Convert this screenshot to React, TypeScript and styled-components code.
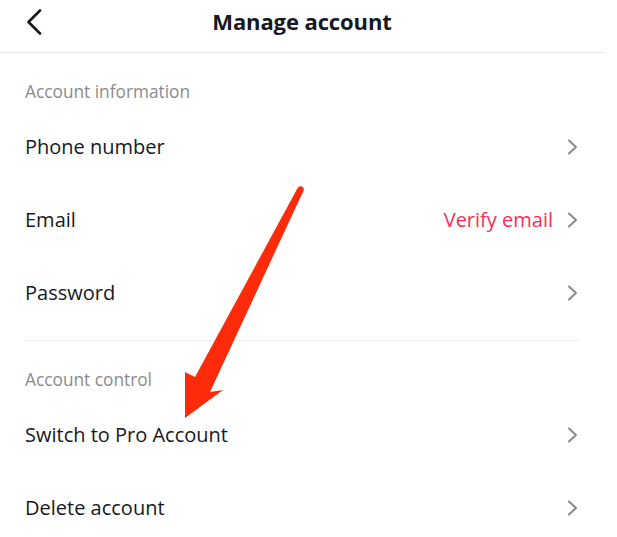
import React from 'react'
import styled, { createGlobalStyle } from 'styled-components'

const GlobalStyle = createGlobalStyle`
  html, body {
    margin: 0;
    padding: 0;
    background: #fff;
  }
  body {
    font-family: 'Open Sans', 'Liberation Sans', sans-serif;
    color: #161823;
  }
`

const Page = styled.div`
  position: relative;
  width: 617px;
  height: 537px;
  overflow: hidden;
  background: #fff;
`

const Screen = styled.div`
  width: 604px;
`

const Header = styled.header`
  display: grid;
  grid-template-columns: 80px 1fr 80px;
  align-items: center;
  height: 52px;
  border-bottom: 1px solid #e4e4e4;
`

const BackButton = styled.button`
  display: flex;
  align-items: center;
  justify-content: flex-start;
  height: 52px;
  padding: 0 0 8px 26px;
  margin: 0;
  border: none;
  background: none;
  cursor: pointer;
`

const Title = styled.h1`
  margin: 0 0 10px;
  text-align: center;
  font-size: 22px;
  font-weight: 700;
  letter-spacing: -0.1px;
  color: #161823;
`

const Section = styled.section<{ $divided?: boolean }>`
  margin: ${({ $divided }) => ($divided ? '9px 24px 0 25px' : '0 24px 0 25px')};
  border-top: ${({ $divided }) => ($divided ? '1px solid #efefef' : 'none')};
`

const SectionTitle = styled.h2`
  margin: 0;
  padding: 28px 0 9px;
  font-size: 17.3px;
  line-height: 22px;
  font-weight: 400;
  color: #8a8b91;
`

const Row = styled.div`
  display: flex;
  align-items: center;
  box-sizing: border-box;
  height: 73px;
  padding-bottom: 4px;
  font-size: 20px;
  color: #161823;
  cursor: pointer;
`

const RowLabel = styled.span`
  flex: 1;
`

const RowHint = styled.span<{ $tone?: 'alert' }>`
  margin-right: 14px;
  color: ${({ $tone }) => ($tone === 'alert' ? '#fe2c55' : '#8a8b91')};
`

const Chevron = styled.svg`
  display: block;
  margin-right: 2px;
`

const Annotation = styled.svg`
  position: absolute;
  left: 0;
  top: 0;
  pointer-events: none;
`

const RowArrow = () => (
  <Chevron width="11" height="16" viewBox="0 0 11 16">
    <polyline points="2,1.5 9,8 2,14.5" fill="none" stroke="#8a8a8a" strokeWidth="2" strokeLinecap="round" strokeLinejoin="round" />
  </Chevron>
)

type Item = { label: string; hint?: string; tone?: 'alert' }

const sections: { title: string; items: Item[] }[] = [
  {
    title: 'Account information',
    items: [{ label: 'Phone number' }, { label: 'Email', hint: 'Verify email', tone: 'alert' }, { label: 'Password' }],
  },
  {
    title: 'Account control',
    items: [{ label: 'Switch to Pro Account' }, { label: 'Delete account' }],
  },
]

export default function App() {
  return (
    <Page>
      <GlobalStyle />
      <Screen>
        <Header>
          <BackButton aria-label="Back">
            <svg width="16" height="26" viewBox="0 0 16 26">
              <polyline points="14,1.5 2.5,13 14,24.5" fill="none" stroke="#161823" strokeWidth="2.6" strokeLinecap="round" strokeLinejoin="round" />
            </svg>
          </BackButton>
          <Title>Manage account</Title>
          <span />
        </Header>

        {sections.map((section, i) => (
          <Section key={section.title} $divided={i > 0}>
            <SectionTitle>{section.title}</SectionTitle>
            {section.items.map((item) => (
              <Row key={item.label}>
                <RowLabel>{item.label}</RowLabel>
                {item.hint && <RowHint $tone={item.tone}>{item.hint}</RowHint>}
                <RowArrow />
              </Row>
            ))}
          </Section>
        ))}
      </Screen>

      {/* red callout arrow pointing at "Switch to Pro Account" */}
      <Annotation width="617" height="537" viewBox="0 0 617 537">
        <path
          d="M303.4 190.9 L210 392 L223 390 L185 418 L185 372 L195 377 L297.6 188.1 A3.2 3.2 0 0 1 303.4 190.9 Z"
          fill="#fe2b0b"
        />
      </Annotation>
    </Page>
  )
}
